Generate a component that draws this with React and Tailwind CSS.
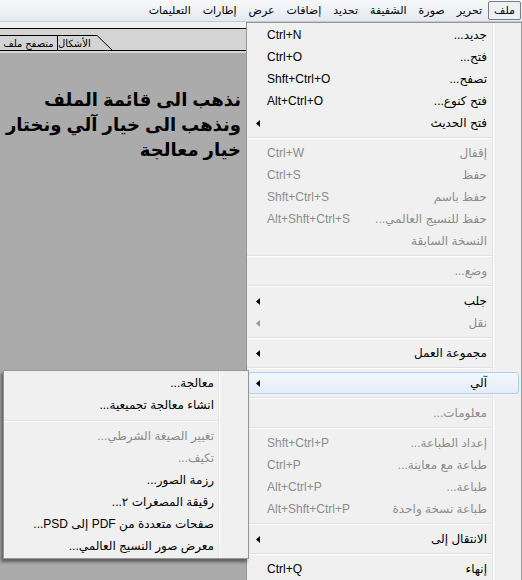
import React from "react";

const ff = "font-['Liberation_Sans','DejaVu_Sans',sans-serif]";

const menubar = ["ملف", "تحرير", "صورة", "الشفيفة", "تحديد", "إضافات", "عرض", "إطارات", "التعليمات"];

const mainItems = [
  { label: "جديد...", sc: "Ctrl+N" },
  { label: "فتح...", sc: "Ctrl+O" },
  { label: "تصفح...", sc: "Shft+Ctrl+O" },
  { label: "فتح كنوع...", sc: "Alt+Ctrl+O" },
  { label: "فتح الحديث", sub: true },
  "sep",
  { label: "إقفال", sc: "Ctrl+W", off: true },
  { label: "حفظ", sc: "Ctrl+S", off: true },
  { label: "حفظ باسم", sc: "Shft+Ctrl+S", off: true },
  { label: "حفظ للنسيج العالمي...", sc: "Alt+Shft+Ctrl+S", off: true },
  { label: "النسخة السابقة", off: true },
  "sep",
  { label: "وضع...", off: true },
  "sep",
  { label: "جلب", sub: true },
  { label: "نقل", sub: true, off: true },
  "sep",
  { label: "مجموعة العمل", sub: true },
  "sep",
  { label: "آلي", sub: true, active: true },
  "sep",
  { label: "معلومات...", off: true },
  "sep",
  { label: "إعداد الطباعة...", sc: "Shft+Ctrl+P", off: true },
  { label: "طباعة مع معاينة...", sc: "Ctrl+P", off: true },
  { label: "طباعة...", sc: "Alt+Ctrl+P", off: true },
  { label: "طباعة نسخة واحدة", sc: "Alt+Shft+Ctrl+P", off: true },
  "sep",
  { label: "الانتقال إلى", sub: true },
  "sep",
  { label: "إنهاء", sc: "Ctrl+Q" },
];

const subItems = [
  { label: "معالجة..." },
  { label: "انشاء معالجة تجميعية..." },
  "sep",
  { label: "تغيير الصيغة الشرطي...", off: true },
  { label: "تكيف...", off: true },
  { label: "رزمة الصور..." },
  { label: "رقيقة المصغرات ٢..." },
  { label: "صفحات متعددة من PDF إلى PSD..." },
  { label: "معرض صور النسيج العالمي..." },
];

function Arrow({ off }) {
  return (
    <svg width="4" height="7" viewBox="0 0 4 7" className="block">
      <polygon points="4,0 4,7 0,3.5" fill={off ? "#9a9a9a" : "#000"} />
    </svg>
  );
}

function MainItem({ it }) {
  const color = it.off ? "text-[#8d8d8d]" : "text-black";
  const box = it.active
    ? "rounded-[3px] border-[#a8d1f5] bg-[linear-gradient(#f3f8fd,#e2edf9)]"
    : "border-transparent";
  return (
    <div className={`ml-[1px] mr-[2px] flex h-[22px] items-center border pl-[7px] pr-[31px] ${box} ${color}`}>
      <span className="flex w-[11px] items-center">{it.sub && <Arrow off={it.off} />}</span>
      <span className="text-[12px]">{it.sc}</span>
      <span className="flex-1" />
      <span dir="rtl" className="text-[12px]">
        {it.label}
      </span>
    </div>
  );
}

function SubItem({ it }) {
  const color = it.off ? "text-[#8d8d8d]" : "text-black";
  return (
    <div className={`mx-[1px] flex h-[22px] items-center justify-end border border-transparent pr-[32px] ${color}`}>
      <span dir="rtl" className="text-[12px]">
        {it.label}
      </span>
    </div>
  );
}

export default function App() {
  return (
    <div className={`relative flex h-[580px] w-[522px] flex-col overflow-hidden bg-[#f0f0f0] ${ff}`}>
      {/* menu bar */}
      <div className="flex h-[22px] flex-row-reverse items-center border-b border-[#c5cad2] bg-[linear-gradient(#f7f8fa,#e4e8ef)] pr-[1px]">
        {menubar.map((m, i) => (
          <div
            key={m}
            dir="rtl"
            className={`flex h-[19px] items-center rounded-[2px] border px-[5px] text-[11px] text-black ${
              i === 0 ? "border-[#7d7d7d] bg-[#edf1f6]" : "border-transparent"
            }`}
          >
            {m}
          </div>
        ))}
      </div>

      {/* left work area */}
      <div className="flex flex-1 flex-col">
        <div className="h-[6px] bg-[#f0f0f0]" />
        <div className="flex h-[23px] items-end border-y border-black bg-[#d4d4d4] pr-[276px]">
          <div className="flex h-[15px] w-[58px] items-center justify-center whitespace-nowrap border-t border-r border-black text-[10px]" dir="rtl">
            متصفح ملف
          </div>
          <div className="flex h-[15px] w-[39px] items-center justify-end whitespace-nowrap border-t border-black text-[10px]" dir="rtl">
            الأشكال
          </div>
          <svg width="15" height="15" viewBox="0 0 15 15" className="block">
            <line x1="0" y1="0.5" x2="15" y2="15" stroke="#000" strokeWidth="1" />
          </svg>
        </div>
        <div className="h-[2px] bg-[#d4d4d4]" />
        <div className="flex-1 bg-[#ababab]">
          <div dir="rtl" className="mt-[35px] w-[246px] whitespace-nowrap pr-[5px] text-right text-[18px] font-bold leading-[25px] text-black">
            <div>نذهب الى قائمة الملف</div>
            <div>ونذهب الى خيار آلي ونختار</div>
            <div>خيار معالجة</div>
          </div>
        </div>
      </div>

      {/* file menu */}
      <div className="absolute left-[246px] top-[22px] w-[276px] border border-[#979797] bg-[linear-gradient(to_right,#f0f0f0_245px,#e2e3e3_245px,#e2e3e3_246px,#ffffff_246px,#ffffff_247px,#f0f0f0_247px)] pt-[1px]">
        {mainItems.map((it, i) =>
          it === "sep" ? (
            <div key={i} className="flex h-[8px] flex-col justify-center">
              <div className="h-[1px] w-[245px] bg-[#e0e0e0]" />
              <div className="h-[1px] w-[245px] bg-white" />
            </div>
          ) : (
            <MainItem key={i} it={it} />
          )
        )}
      </div>

      {/* automate submenu */}
      <div className="absolute left-[3px] top-[370px] w-[246px] border border-[#979797] bg-[linear-gradient(to_right,#f0f0f0_214px,#e2e3e3_214px,#e2e3e3_215px,#ffffff_215px,#ffffff_216px,#f0f0f0_216px)] py-[1px] shadow-[-2px_3px_3px_rgba(0,0,0,0.45)]">
        {subItems.map((it, i) =>
          it === "sep" ? (
            <div key={i} className="flex h-[9px] flex-col justify-center pl-[1px]">
              <div className="h-[1px] w-[213px] bg-[#e0e0e0]" />
              <div className="h-[1px] w-[213px] bg-white" />
            </div>
          ) : (
            <SubItem key={i} it={it} />
          )
        )}
      </div>
    </div>
  );
}
